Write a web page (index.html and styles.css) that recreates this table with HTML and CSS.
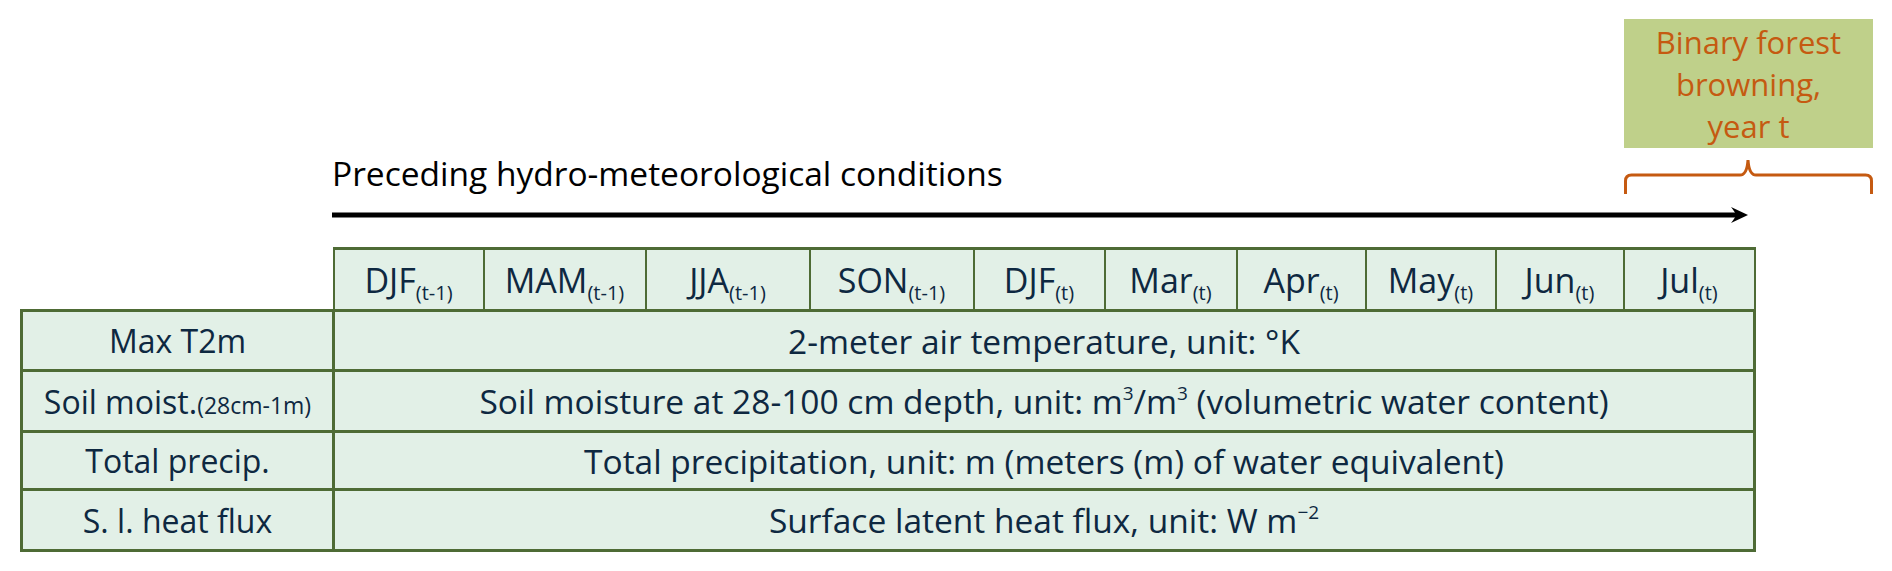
FILE: index.html
```html
<!DOCTYPE html>
<html lang="en">
<head>
<meta charset="utf-8">
<title>Preceding hydro-meteorological conditions</title>
<link rel="stylesheet" href="styles.css">
</head>
<body>
<div class="page">
  <div class="top">
    <div class="target">Binary forest<br>browning,<br>year t</div>
    <h1 class="title">Preceding hydro-meteorological conditions</h1>
    <svg class="brace" viewBox="0 0 249 35" aria-hidden="true">
      <path d="M1.5 35 V22 Q1.5 16 7.5 16 H116 Q123 16 124 1 Q125 16 132 16 H241.5 Q247.5 16 247.5 22 V35" fill="none" stroke="#C55A11" stroke-width="3"/>
    </svg>
    <svg class="arrow" viewBox="0 0 1416 16" aria-hidden="true">
      <rect x="0" y="5.5" width="1404" height="5" fill="#000"/>
      <path d="M1416 8 L1399 0 Q1403 5 1404 8 Q1403 11 1399 16 Z" fill="#000"/>
    </svg>
  </div>
  <table class="grid">
    <colgroup>
      <col class="c-label"><col class="c1"><col class="c2"><col class="c3"><col class="c4"><col class="c5"><col class="c6"><col class="c7"><col class="c8"><col class="c9"><col class="c10">
    </colgroup>
    <thead>
      <tr class="head">
        <th class="blank"></th>
        <th>DJF<sub>(t-1)</sub></th>
        <th>MAM<sub>(t-1)</sub></th>
        <th>JJA<sub>(t-1)</sub></th>
        <th>SON<sub>(t-1)</sub></th>
        <th>DJF<sub>(t)</sub></th>
        <th>Mar<sub>(t)</sub></th>
        <th>Apr<sub>(t)</sub></th>
        <th>May<sub>(t)</sub></th>
        <th>Jun<sub>(t)</sub></th>
        <th>Jul<sub>(t)</sub></th>
      </tr>
    </thead>
    <tbody>
      <tr class="r1">
        <td class="label">Max T2m</td>
        <td class="desc" colspan="10">2-meter air temperature, unit: °K</td>
      </tr>
      <tr class="r2">
        <td class="label">Soil moist.<span class="small">(28cm-1m)</span></td>
        <td class="desc" colspan="10">Soil moisture at 28-100 cm depth, unit: m<sup>3</sup>/m<sup>3</sup> (volumetric water content)</td>
      </tr>
      <tr class="r3">
        <td class="label">Total precip.</td>
        <td class="desc" colspan="10">Total precipitation, unit: m (meters (m) of water equivalent)</td>
      </tr>
      <tr class="r4">
        <td class="label">S. l. heat flux</td>
        <td class="desc" colspan="10">Surface latent heat flux, unit: W m<sup>−2</sup></td>
      </tr>
    </tbody>
  </table>
</div>
</body>
</html>
```
FILE: styles.css
```css
* { box-sizing: border-box; }

body {
  margin: 0;
  background: #ffffff;
  font-family: "Open Sans", "Noto Sans", sans-serif;
}

.page {
  padding-left: 20px;
  width: 1892px;
}

.top {
  display: grid;
  grid-template-columns: 1292px 124px 125px;
  margin-left: 312px;
  padding-top: 19px;
}

.target {
  grid-column: 2 / 4;
  grid-row: 1;
  height: 129px;
  margin-bottom: 5px;
  background: #BFD08A;
  color: #C55A11;
  font-size: 31px;
  line-height: 42px;
  text-align: center;
  display: flex;
  align-items: center;
  justify-content: center;
}

.title {
  grid-column: 1;
  grid-row: 2;
  margin: 0;
  font-size: 33.5px;
  font-weight: 400;
  line-height: 40px;
  color: #000000;
}

.brace {
  grid-column: 2 / 4;
  grid-row: 2;
  display: block;
  width: 249px;
  height: 35px;
  margin-top: 6px;
}

.arrow {
  grid-column: 1 / 3;
  grid-row: 3;
  display: block;
  width: 1416px;
  height: 16px;
  margin-top: 13px;
  margin-bottom: 24px;
}

.grid {
  border-collapse: collapse;
  table-layout: fixed;
  width: 1733px;
  color: #0E2841;
  font-size: 32px;
}

.c-label { width: 312px; }
.c1 { width: 150px; }
.c2 { width: 162px; }
.c3 { width: 164px; }
.c4 { width: 164px; }
.c5 { width: 131px; }
.c6 { width: 132px; }
.c7 { width: 129px; }
.c8 { width: 130px; }
.c9 { width: 128px; }
.c10 { width: 131px; }

.grid th,
.grid td {
  border: 3px solid #4E6B35;
  background: #E2F0E7;
  padding: 0;
  text-align: center;
  vertical-align: middle;
  font-weight: 400;
  white-space: nowrap;
}

.grid thead th {
  border-left-width: 2px;
  border-right-width: 2px;
  font-size: 34px;
}

.grid th.blank {
  border: none;
  background: transparent;
}

.grid td.label { font-size: 32px; }
.grid td.desc { font-size: 33.5px; }

.head { height: 62px; }
.r1 { height: 60px; }
.r2 { height: 61px; }
.r3 { height: 58px; }
.r4 { height: 61px; }

sub {
  font-size: 20px;
  line-height: 0;
  vertical-align: -7px;
}

sup {
  font-size: 19px;
  line-height: 0;
  vertical-align: 14px;
}

.small {
  font-size: 23px;
}
```
